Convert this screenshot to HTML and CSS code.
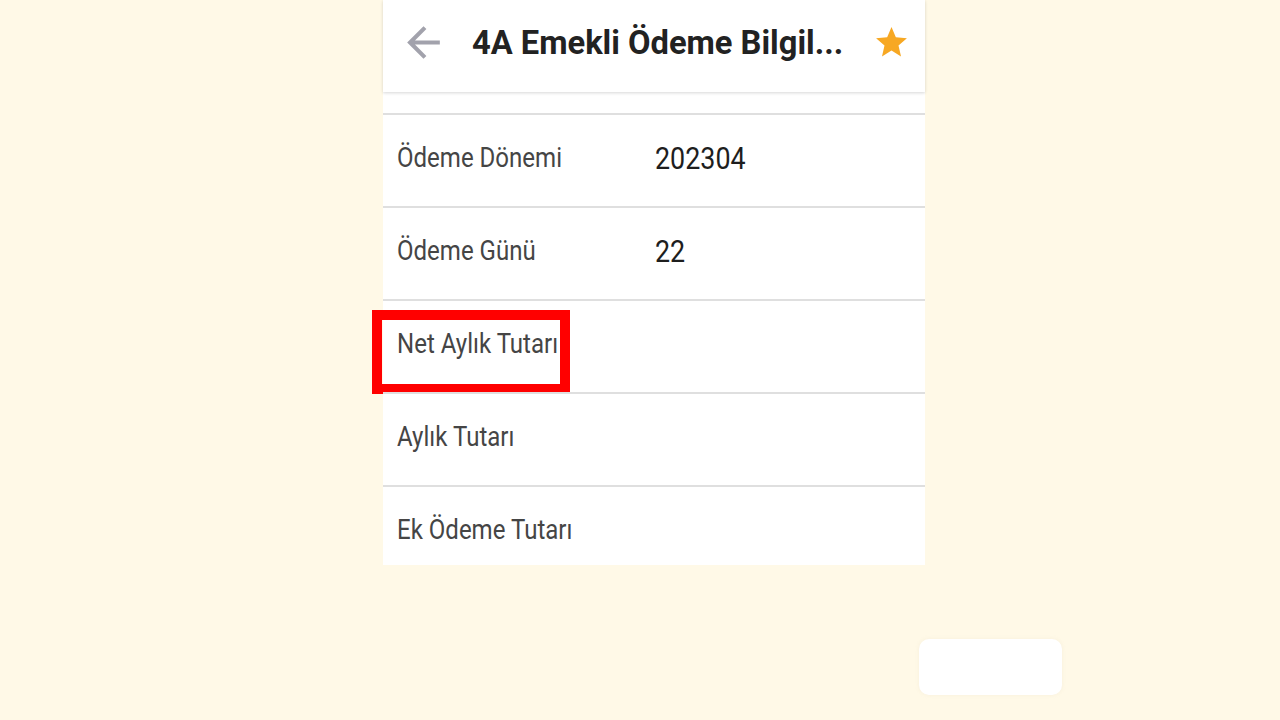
FILE: index.html
```html
<!DOCTYPE html>
<html lang="tr">
<head>
<meta charset="utf-8">
<title>4A Emekli Ödeme Bilgileri</title>
<link rel="stylesheet" href="styles.css">
</head>
<body>
<div class="panel">
  <header class="header">
    <svg class="back" viewBox="0 0 24 24" aria-hidden="true"><path d="M20 11H7.83l5.59-5.59L12 4l-8 8 8 8 1.41-1.41L7.83 13H20v-2z"/></svg>
    <h1 class="title">4A Emekli Ödeme Bilgil...</h1>
    <svg class="star" viewBox="0 0 24 24" aria-hidden="true"><path d="M12 17.27L18.180 21l-1.64-7.03L22 9.24l-7.19-.61L12 2 9.19 8.63 2 9.24l5.46 4.73L5.82 21z"/></svg>
  </header>
  <div class="spacer"></div>
  <div class="row"><span class="label">Ödeme Dönemi</span><span class="value">202304</span></div>
  <div class="row"><span class="label">Ödeme Günü</span><span class="value">22</span></div>
  <div class="row marked"><span class="label">Net Aylık Tutarı</span><span class="value"></span></div>
  <div class="row"><span class="label">Aylık Tutarı</span><span class="value"></span></div>
  <div class="row last"><span class="label">Ek Ödeme Tutarı</span><span class="value"></span></div>
</div>
<div class="floating-box"></div>
</body>
</html>
```
FILE: styles.css
```css
html, body {
  margin: 0;
  padding: 0;
}
body {
  width: 1280px;
  height: 720px;
  background: #fff9e7;
  font-family: Roboto, "Noto Sans", "Liberation Sans", sans-serif;
  position: relative;
  overflow: hidden;
}
.panel {
  margin-left: 383px;
  width: 542px;
  background: #ffffff;
}
.header {
  position: relative;
  z-index: 1;
  height: 92px;
  box-sizing: border-box;
  display: flex;
  align-items: center;
  padding: 0 15px 7px 16px;
  background: #ffffff;
  box-shadow: 0 1px 3px rgba(0, 0, 0, 0.16);
}
.back {
  width: 49px;
  height: 49px;
  fill: #a2a2ac;
  flex: none;
}
.title {
  flex: 1;
  margin: 0 0 0 24px;
  font-size: 33px;
  font-weight: 700;
  color: #222222;
  white-space: nowrap;
  transform: scaleX(0.99);
  transform-origin: left center;
}
.star {
  width: 37px;
  height: 37px;
  fill: #f7a823;
  flex: none;
}
.spacer {
  height: 21px;
}
.row {
  position: relative;
  height: 93px;
  box-sizing: border-box;
  border-top: 2px solid #dfdfdf;
  display: flex;
  align-items: center;
  padding: 0 0 5px 14px;
}
.row.last {
  height: 80px;
  padding-bottom: 0;
  align-items: flex-start;
  padding-top: 27px;
}
.label {
  width: 258px;
  flex: none;
  font-size: 27px;
  color: #454545;
  white-space: nowrap;
  transform: scaleX(0.89);
  transform-origin: left center;
}
.value {
  font-size: 32px;
  color: #1e1e1e;
  transform: scaleX(0.84);
  transform-origin: left center;
}
.row.marked::after {
  content: "";
  position: absolute;
  left: -11px;
  top: 9px;
  width: 198px;
  height: 84px;
  box-sizing: border-box;
  border: 10px solid #ff0000;
}
.floating-box {
  position: absolute;
  left: 919px;
  top: 639px;
  width: 143px;
  height: 56px;
  border-radius: 10px;
  background: #ffffff;
  box-shadow: 0 0 4px rgba(200, 190, 160, 0.15);
}
```
